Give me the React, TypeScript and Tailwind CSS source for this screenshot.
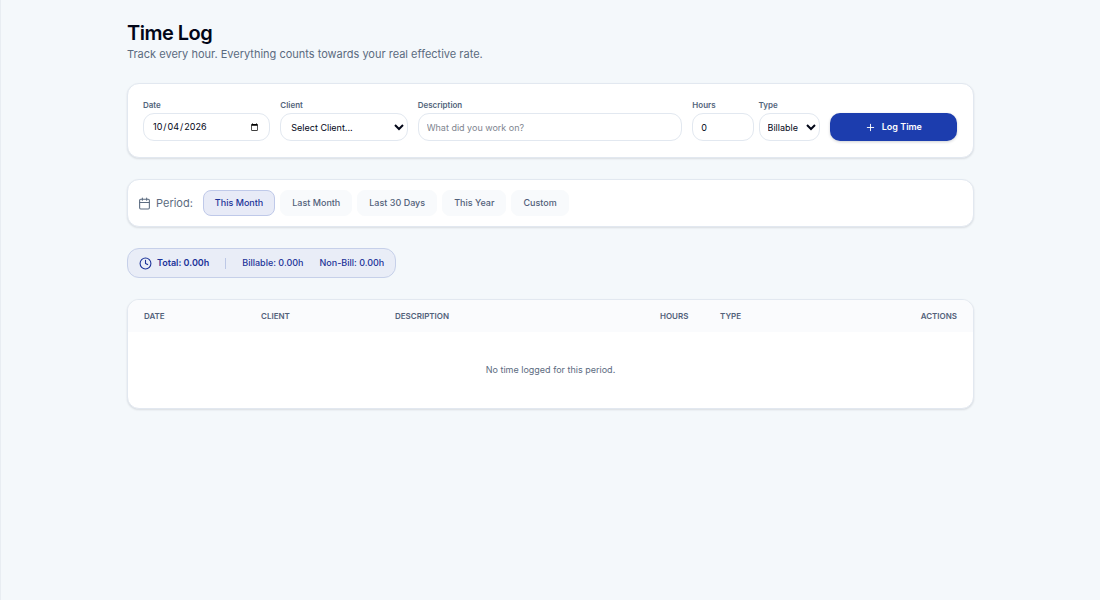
import React from 'react';
import { Calendar, Clock, Plus } from 'lucide-react';

const periods = ['This Month', 'Last Month', 'Last 30 Days', 'This Year', 'Custom'];

const card = 'rounded-xl border border-[#e2e8f0] bg-white shadow-[0_1px_2px_rgba(15,23,42,0.12)]';
const label = 'block text-[8px] leading-3 font-semibold text-[#52647b] mb-[2px]';
const field = 'block w-full h-7 rounded-[11px] border border-[#e2e8f0] bg-white text-[9px] text-[#020617] focus:outline-none';

export default function App() {
    const [period, setPeriod] = React.useState('This Month');

    return (
        <div className="min-h-screen border-l border-[#e8edf2] bg-[#f4f8fb] px-6 pt-[22px] font-['Inter',sans-serif] text-[#020617]">
            <main className="mx-auto max-w-[847px] flex flex-col gap-[21px]">
                <header>
                    <h1 className="text-[20px] leading-[22px] font-semibold tracking-tight">Time Log</h1>
                    <p className="mt-[2px] text-[11px] leading-4 text-[#5b6b80]">
                        Track every hour. Everything counts towards your real effective rate.
                    </p>
                </header>

                {/* Entry form */}
                <form className={`${card} pl-[15px] pr-4 pt-[15px] pb-4`} onSubmit={(e) => e.preventDefault()}>
                    <div className="grid grid-cols-12 gap-[10px] items-end">
                        <div className="col-span-2">
                            <label htmlFor="date" className={label}>Date</label>
                            <input id="date" type="date" defaultValue="2026-10-04" className={`${field} px-2`} />
                        </div>
                        <div className="col-span-2">
                            <label htmlFor="client" className={label}>Client</label>
                            <select id="client" className={`${field} pl-[6px]`}>
                                <option>Select Client...</option>
                            </select>
                        </div>
                        <div className="col-span-4">
                            <label htmlFor="description" className={label}>Description</label>
                            <input id="description" type="text" placeholder="What did you work on?" className={`${field} px-2 placeholder:text-[#80858f]`} />
                        </div>
                        <div className="col-span-2 flex gap-[5px]">
                            <div className="flex-1 min-w-0">
                                <label htmlFor="hours" className={label}>Hours</label>
                                <input id="hours" type="number" defaultValue={0} className={`${field} px-2`} />
                            </div>
                            <div className="flex-1 min-w-0">
                                <label htmlFor="type" className={label}>Type</label>
                                <select id="type" className={`${field} pl-1`}>
                                    <option>Billable</option>
                                    <option>Non-Billable</option>
                                </select>
                            </div>
                        </div>
                        <button type="submit" className="col-span-2 h-7 rounded-[10px] bg-[#1c3dae] text-white text-[9px] font-semibold flex items-center justify-center gap-[6px] shadow-[0_1px_3px_rgba(15,23,42,0.2)]">
                            <Plus size={11} />
                            Log Time
                        </button>
                    </div>
                </form>

                {/* Period filter */}
                <section className={`${card} flex flex-wrap items-center gap-[10px] p-[10px]`}>
                    <div className="flex items-center gap-[5px] text-[11px] leading-4 text-[#5b6b80]">
                        <Calendar size={13} />
                        <span>Period:</span>
                    </div>
                    <div className="flex flex-wrap gap-[5px]">
                        {periods.map((p) => (
                            <button
                                key={p}
                                type="button"
                                onClick={() => setPeriod(p)}
                                className={`h-[26px] px-[11px] rounded-lg border text-[9px] font-medium ${
                                    p === period
                                        ? 'bg-[#e8ebf7] border-[#bfc9e9] text-[#1c3399]'
                                        : 'bg-[#f8fafc] border-[#f8fafc] text-[#52617a]'
                                }`}
                            >
                                {p}
                            </button>
                        ))}
                    </div>
                </section>

                {/* Totals */}
                <section className="self-start h-[30px] px-[11px] rounded-xl border border-[#c6d0e9] bg-[#e9edf7] flex items-center text-[9px] font-medium text-[#1c3399]">
                    <Clock size={13} />
                    <span className="ml-[5px] font-semibold">Total: 0.00h</span>
                    <span className="mx-4 h-[11px] w-px bg-[#bdc8e6]" />
                    <span>Billable: 0.00h</span>
                    <span className="ml-4">Non-Bill: 0.00h</span>
                </section>

                <div className={`${card} overflow-hidden`}>
                    <table className="w-full table-fixed text-left">
                        <thead className="bg-[#fafbfd] text-[8px] leading-3 uppercase text-[#52617a]">
                            <tr className="h-8">
                                <th className="w-[133px] pl-4 font-semibold">Date</th>
                                <th className="w-[134px] font-semibold">Client</th>
                                <th className="font-semibold">Description</th>
                                <th className="w-[60px] font-semibold">Hours</th>
                                <th className="w-[126px] font-semibold">Type</th>
                                <th className="w-[127px] pr-4 text-right font-semibold">Actions</th>
                            </tr>
                        </thead>
                        <tbody>
                            <tr>
                                <td colSpan={6} className="h-[76px] text-center text-[9px] text-[#5b6b80]">
                                    No time logged for this period.
                                </td>
                            </tr>
                        </tbody>
                    </table>
                </div>
            </main>
        </div>
    );
}
